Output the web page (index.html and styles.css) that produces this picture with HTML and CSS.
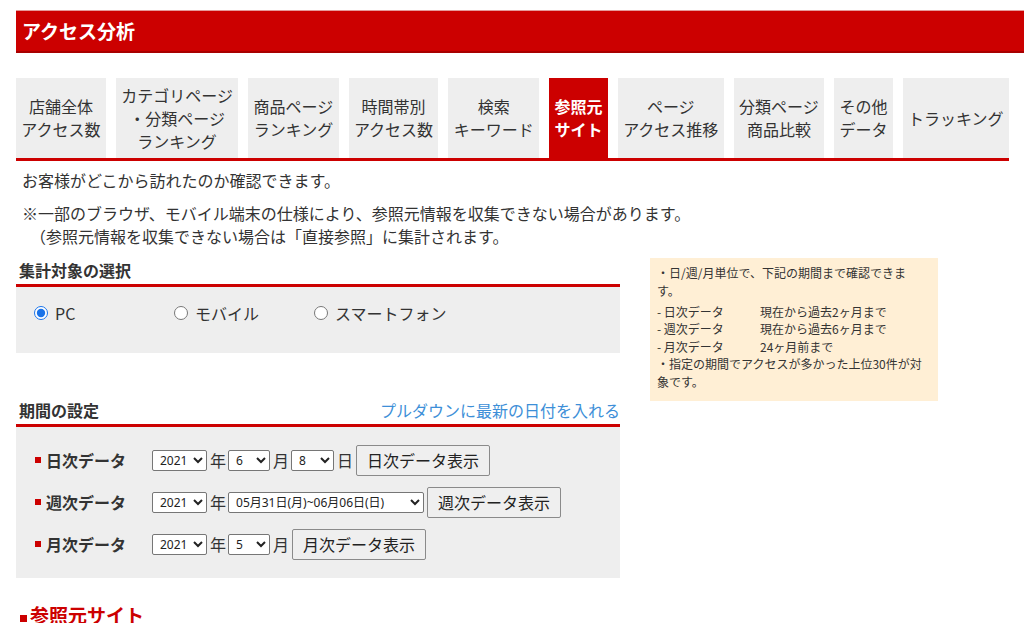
FILE: index.html
```html
<!DOCTYPE html>
<html lang="ja">
<head>
<meta charset="utf-8">
<title>アクセス分析</title>
<link rel="stylesheet" href="styles.css">
</head>
<body>
<div class="page">
  <div class="header">アクセス分析</div>
  <ul class="tabs">
    <li class="tab">店舗全体<br>アクセス数</li>
    <li class="tab">カテゴリページ<br>・分類ページ<br>ランキング</li>
    <li class="tab">商品ページ<br>ランキング</li>
    <li class="tab">時間帯別<br>アクセス数</li>
    <li class="tab">検索<br>キーワード</li>
    <li class="tab active">参照元<br>サイト</li>
    <li class="tab">ページ<br>アクセス推移</li>
    <li class="tab">分類ページ<br>商品比較</li>
    <li class="tab">その他<br>データ</li>
    <li class="tab">トラッキング</li>
  </ul>
  <p class="lead">お客様がどこから訪れたのか確認できます。</p>
  <p class="note">※一部のブラウザ、モバイル端末の仕様により、参照元情報を収集できない場合があります。<br>　（参照元情報を収集できない場合は「直接参照」に集計されます。</p>

  <div class="cols">
    <div class="main">
      <div class="sec-head"><h2 class="sec-title">集計対象の選択</h2></div>
      <div class="panel radio-panel">
        <label class="radio"><input type="radio" name="device" checked>PC</label>
        <label class="radio"><input type="radio" name="device">モバイル</label>
        <label class="radio"><input type="radio" name="device">スマートフォン</label>
      </div>

      <div class="sec-head period-head">
        <h2 class="sec-title">期間の設定</h2>
        <a class="link" href="#">プルダウンに最新の日付を入れる</a>
      </div>
      <div class="panel period-panel">
        <div class="row">
          <span class="row-label">日次データ</span>
          <select class="sel sel-year"><option>2021</option></select><span class="unit">年</span>
          <select class="sel sel-m"><option>6</option></select><span class="unit">月</span>
          <select class="sel sel-d"><option>8</option></select><span class="unit">日</span>
          <button class="btn" type="button">日次データ表示</button>
        </div>
        <div class="row">
          <span class="row-label">週次データ</span>
          <select class="sel sel-year"><option>2021</option></select><span class="unit">年</span>
          <select class="sel sel-week"><option>05月31日(月)~06月06日(日)</option></select>
          <button class="btn" type="button">週次データ表示</button>
        </div>
        <div class="row">
          <span class="row-label">月次データ</span>
          <select class="sel sel-year"><option>2021</option></select><span class="unit">年</span>
          <select class="sel sel-m"><option>5</option></select><span class="unit">月</span>
          <button class="btn" type="button">月次データ表示</button>
        </div>
      </div>
    </div>

    <aside class="info">
      <p class="info-p">・日/週/月単位で、下記の期間まで確認できます。</p>
      <div class="info-list">
        <div class="info-row"><span class="info-k">- 日次データ</span><span>現在から過去2ヶ月まで</span></div>
        <div class="info-row"><span class="info-k">- 週次データ</span><span>現在から過去6ヶ月まで</span></div>
        <div class="info-row"><span class="info-k">- 月次データ</span><span>24ヶ月前まで</span></div>
      </div>
      <p class="info-p">・指定の期間でアクセスが多かった上位30件が対象です。</p>
    </aside>
  </div>

  <h3 class="result">参照元サイト</h3>
</div>
</body>
</html>
```

FILE: styles.css
```css
* { box-sizing: border-box; }

html, body {
  margin: 0;
  padding: 0;
  background: #fff;
}

body {
  font-family: "Noto Sans CJK JP", "Noto Sans", sans-serif;
  font-size: 16px;
  color: #333;
  overflow: hidden;
}

.page {
  padding-left: 16px;
}

.header {
  margin-top: 10px;
  height: 43px;
  background: #cc0000;
  border-top: 1px solid #e59a9a;
  border-bottom: 2px solid #a80000;
  color: #fff;
  font-weight: bold;
  font-size: 19px;
  line-height: 40px;
  padding-left: 6px;
}

.tabs {
  list-style: none;
  margin: 25px 0 0;
  padding: 0;
  width: 993px;
  display: flex;
  gap: 10px;
  border-bottom: 3px solid #cc0000;
}

.tab {
  flex: 1 1 auto;
  height: 80px;
  padding: 0 5px;
  background: #eeeeee;
  display: flex;
  align-items: center;
  justify-content: center;
  text-align: center;
  line-height: 23px;
  font-size: 16px;
  color: #333;
  white-space: nowrap;
}

.tab.active {
  background: #cc0000;
  color: #fff;
  font-weight: bold;
}

.lead {
  margin: 9px 0 0;
  padding-left: 6px;
  line-height: 20px;
}

.note {
  margin: 12px 0 0;
  padding-left: 6px;
  line-height: 23px;
}

.cols {
  margin-top: 10px;
  display: flex;
  gap: 30px;
  align-items: flex-start;
}

.main {
  width: 604px;
}

.sec-head {
  padding: 2px 0 4px 3px;
  border-bottom: 3px solid #cc0000;
  display: flex;
  justify-content: space-between;
  align-items: center;
}

.sec-title {
  margin: 0;
  font-size: 16px;
  line-height: 20px;
  font-weight: bold;
  color: #333;
}

.panel {
  background: #eeeeee;
}

.radio-panel {
  height: 66px;
  padding: 16px 0 0 18px;
  display: flex;
  align-items: flex-start;
}

.radio {
  width: 140px;
  height: 20px;
  display: flex;
  align-items: center;
  line-height: 20px;
  font-size: 16px;
  color: #333;
}

.radio input {
  margin: 0 7px 0 0;
  width: 14px;
  height: 14px;
  accent-color: #1a73e8;
}

.period-head {
  margin-top: 45px;
}

.link {
  color: #3d8fd8;
  text-decoration: none;
  font-size: 16px;
  line-height: 20px;
}

.period-panel {
  height: 151px;
  padding: 12px 0 0 19px;
}

.row {
  height: 42px;
  display: flex;
  align-items: center;
}

.row-label {
  width: 117px;
  font-weight: bold;
  font-size: 16px;
  color: #333;
  display: flex;
  align-items: center;
}

.row-label::before {
  content: "";
  display: inline-block;
  width: 6px;
  height: 6px;
  background: #cc0000;
  margin-right: 5px;
}

.sel {
  height: 21px;
  font-family: "Noto Sans", "Noto Sans CJK JP", sans-serif;
  font-size: 12px;
  color: #222;
  background: #fff;
  border: 1px solid #767676;
  border-radius: 2px;
  padding: 0 0 0 3px;
}

.sel-year { width: 55px; }
.sel-m { width: 42px; }
.sel-d { width: 43px; }
.sel-week { width: 196px; }

.unit {
  margin: 0 2px 0 3px;
  font-size: 16px;
  line-height: 20px;
  color: #333;
}

.btn {
  height: 31px;
  padding: 0 10px;
  margin-left: 1px;
  font-family: "Noto Sans CJK JP", sans-serif;
  font-size: 16px;
  color: #222;
  background: #efefef;
  border: 1px solid #8a8a8a;
  border-radius: 2px;
}

.sel-week + .btn { margin-left: 3px; }

.info {
  width: 288px;
  height: 143px;
  background: #ffefd5;
  padding: 6px 10px 0 7px;
  font-size: 12px;
  line-height: 17.5px;
  color: #333;
}

.info-p {
  margin: 0;
}

.info-list {
  margin: 3.5px 0 0;
}

.info-row {
  display: flex;
}

.info-k {
  width: 103px;
}

.result {
  margin: 25px 0 0;
  padding-left: 4px;
  font-size: 19px;
  line-height: 24px;
  font-weight: bold;
  color: #cc0000;
  display: flex;
  align-items: flex-end;
}

.result::before {
  content: "";
  display: inline-block;
  width: 7px;
  height: 7px;
  background: #cc0000;
  margin: 0 3px 5px 0;
}
```
